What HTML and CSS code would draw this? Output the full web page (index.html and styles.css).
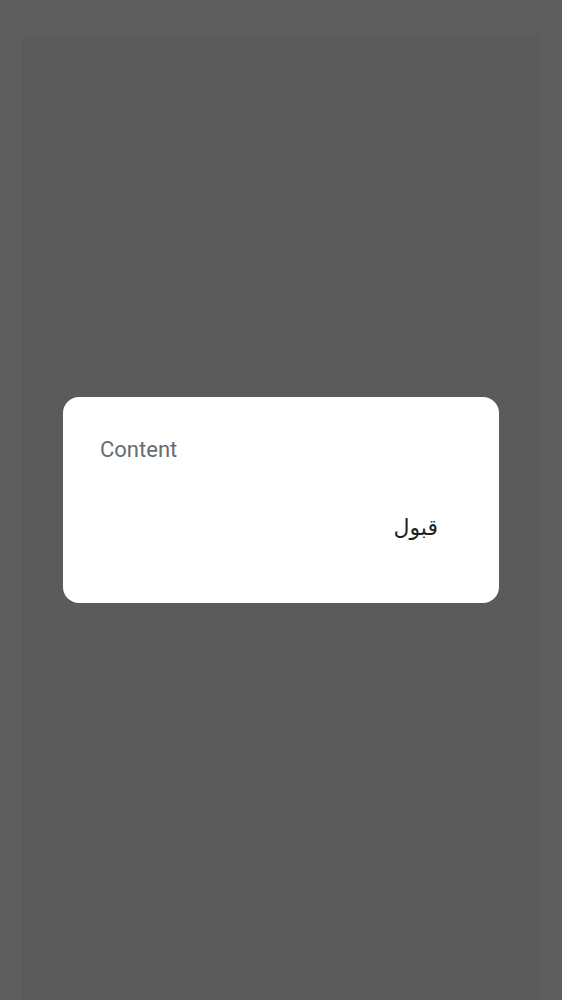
FILE: index.html
```html
<!DOCTYPE html>
<html lang="en">
<head>
<meta charset="utf-8">
<link rel="stylesheet" href="styles.css">
</head>
<body>
<div class="scrim">
  <div class="dialog" role="dialog">
    <div class="content">Content</div>
    <div class="actions">
      <button class="btn" dir="rtl" lang="ar">قبول</button>
    </div>
  </div>
</div>
</body>
</html>
```
FILE: styles.css
```css
html, body {
  margin: 0;
  padding: 0;
  height: 100%;
}
body {
  background: #5b5b5b;
  font-family: Roboto, "Noto Sans", sans-serif;
}
.scrim {
  height: 100%;
  background: #5b5b5b;
  display: flex;
  align-items: center;
  justify-content: center;
  box-shadow: inset 22px 0 0 #5e5e5e, inset -22px 0 0 #5e5e5e, inset 0 35px 0 #5e5e5e;
}
.dialog {
  width: 436px;
  height: 206px;
  box-sizing: border-box;
  background: #ffffff;
  border-radius: 16px;
  padding: 40px 37px 0;
  display: flex;
  flex-direction: column;
}
.content {
  font-size: 22px;
  line-height: 26px;
  color: #646b75;
}
.actions {
  display: flex;
  justify-content: flex-end;
  margin-top: 40px;
}
.btn {
  height: 48px;
  padding: 0 24px;
  border: none;
  background: transparent;
  font-family: "DejaVu Sans", sans-serif;
  font-size: 22px;
  color: #1f1f1f;
}
```
